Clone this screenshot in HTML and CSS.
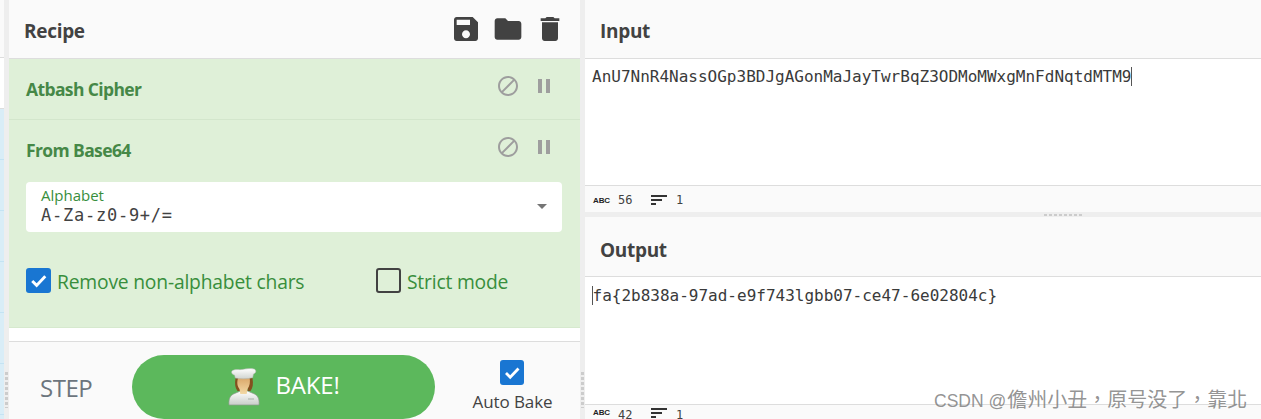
FILE: index.html
```html
<!DOCTYPE html>
<html lang="en">
<head>
<meta charset="utf-8">
<title>CyberChef</title>
<link rel="stylesheet" href="styles.css">
</head>
<body>
<div class="app">
  <div class="strip"><div class="strip-top"></div><div class="strip-mid"></div><div class="strip-blue"></div></div>
  <div class="gutter"><span class="grip-v"></span></div>
  <section class="recipe">
    <header class="head recipe-head">
      <h2 class="title">Recipe</h2>
      <div class="head-icons">
        <svg class="head-icon" viewBox="0 0 24 24"><path d="M17 3H5c-1.11 0-2 .9-2 2v14c0 1.1.89 2 2 2h14c1.1 0 2-.9 2-2V7l-4-4zm-5 16c-1.66 0-3-1.34-3-3s1.34-3 3-3 3 1.34 3 3-1.34 3-3 3zm3-10H5V5h10v4z"/></svg>
        <svg class="head-icon" viewBox="0 0 24 24"><path d="M10 4H4c-1.1 0-1.99.9-1.99 2L2 18c0 1.1.9 2 2 2h16c1.1 0 2-.9 2-2V8c0-1.1-.9-2-2-2h-8l-2-2z"/></svg>
        <svg class="head-icon" viewBox="0 0 24 24"><path d="M6 19c0 1.1.9 2 2 2h8c1.1 0 2-.9 2-2V7H6v12zM19 4h-3.5l-1-1h-5l-1 1H5v2h14V4z"/></svg>
      </div>
    </header>
    <div class="op op-first">
      <div class="op-row">
        <span class="op-name">Atbash Cipher</span>
        <span class="op-controls">
          <svg class="op-icon" viewBox="0 0 24 24"><path d="M12 2C6.48 2 2 6.48 2 12s4.48 10 10 10 10-4.48 10-10S17.52 2 12 2zM4 12c0-4.42 3.58-8 8-8 1.85 0 3.55.63 4.9 1.69L5.69 16.9C4.63 15.55 4 13.85 4 12zm8 8c-1.85 0-3.55-.63-4.9-1.69L18.31 7.1C19.37 8.45 20 10.15 20 12c0 4.42-3.58 8-8 8z"/></svg>
          <svg class="op-icon" viewBox="0 0 24 24"><path d="M6 19h4V5H6v14zm8-14v14h4V5h-4z"/></svg>
        </span>
      </div>
    </div>
    <div class="op op-second">
      <div class="op-row">
        <span class="op-name">From Base64</span>
        <span class="op-controls">
          <svg class="op-icon" viewBox="0 0 24 24"><path d="M12 2C6.48 2 2 6.48 2 12s4.48 10 10 10 10-4.48 10-10S17.52 2 12 2zM4 12c0-4.42 3.58-8 8-8 1.85 0 3.55.63 4.9 1.69L5.69 16.9C4.63 15.55 4 13.85 4 12zm8 8c-1.85 0-3.55-.63-4.9-1.69L18.31 7.1C19.37 8.45 20 10.15 20 12c0 4.42-3.58 8-8 8z"/></svg>
          <svg class="op-icon" viewBox="0 0 24 24"><path d="M6 19h4V5H6v14zm8-14v14h4V5h-4z"/></svg>
        </span>
      </div>
      <div class="field">
        <div class="field-text">
          <span class="field-label">Alphabet</span>
          <span class="field-value">A-Za-z0-9+/=</span>
        </div>
        <span class="caret-down"></span>
      </div>
      <div class="checks">
        <label class="check check-a">
          <span class="box box-on"><svg viewBox="0 0 24 24"><path d="M6 12.5l4.2 4.2L18.5 8" /></svg></span>
          <span>Remove non-alphabet chars</span>
        </label>
        <label class="check">
          <span class="box box-off"></span>
          <span>Strict mode</span>
        </label>
      </div>
    </div>
    <div class="spacer"></div>
    <footer class="controls">
      <span class="step">STEP</span>
      <button class="bake">
        <svg class="chef" viewBox="0 0 34 38">
          <defs>
            <linearGradient id="jacket" x1="0" y1="0" x2="0" y2="1"><stop offset="0" stop-color="#ffffff"/><stop offset="1" stop-color="#c9cec9"/></linearGradient>
            <linearGradient id="hat" x1="0" y1="0" x2="0" y2="1"><stop offset="0" stop-color="#ffffff"/><stop offset="1" stop-color="#d0d4d0"/></linearGradient>
            <linearGradient id="face" x1="0" y1="0" x2="0" y2="1"><stop offset="0" stop-color="#d9a566"/><stop offset="1" stop-color="#f3d9a6"/></linearGradient>
          </defs>
          <path d="M2 37c-.5-5 .5-9 4.500-11l7-3h7l7 3c4 2 5 6 4.500 11z" fill="url(#jacket)" stroke="#8d9a8d" stroke-width=".7"/>
          <path d="M8.500 10c-1 6-.3 10 2 13h3l-1-13zM25.500 10c1 6 .3 10-2 13h-3l1-13z" fill="#84501f"/>
          <path d="M11.500 9h11c1 5 .3 9-2 12l-.8 5h-6.400l-.8-5c-2.300-3-3-7-1-12z" fill="url(#face)"/>
          <path d="M5.500 2.500C8.500.8 12 2 15 1.500c4-.6 8-1.500 12-.5 2.500.7 2.500 4-.5 5l-.8 3.700c-5.500 1.400-12 1.400-17.400.4L7.500 7C5 6.500 3.500 4 5.500 2.500z" fill="url(#hat)" stroke="#aeb5ae" stroke-width=".5"/>
          <path d="M21 31h6" stroke="#a9b2a9" stroke-width="1"/>
        </svg>
        <span>BAKE!</span>
      </button>
      <label class="auto">
        <span class="box box-on box-auto"><svg viewBox="0 0 24 24"><path d="M6 12.500l4.200 4.200L18.500 8" /></svg></span>
        <span class="auto-label">Auto Bake</span>
      </label>
    </footer>
  </section>
  <div class="gutter"><span class="grip-v"></span></div>
  <section class="io">
    <div class="pane pane-input">
      <header class="head"><h2 class="title">Input</h2></header>
      <div class="code">AnU7NnR4NassOGp3BDJgAGonMaJayTwrBqZ3ODMoMWxgMnFdNqtdMTM9<span class="cursor"></span></div>
      <div class="status">
        <span class="abc">ABC</span><span class="num">56</span>
        <svg class="sort" viewBox="0 0 16 10"><path d="M0 0h16v2H0zM0 4h11v2H0zM0 8h5v2H0z"/></svg><span class="num">1</span>
      </div>
    </div>
    <div class="hgutter"><span class="grip-h"></span></div>
    <div class="pane pane-output">
      <header class="head head-output"><h2 class="title title-output">Output</h2></header>
      <div class="code code-output"><span class="cursor cursor-start"></span>fa{2b838a-97ad-e9f743lgbb07-ce47-6e02804c}</div>
      <div class="status status-output">
        <span class="abc">ABC</span><span class="num">42</span>
        <svg class="sort" viewBox="0 0 16 10"><path d="M0 0h16v2H0zM0 4h11v2H0zM0 8h5v2H0z"/></svg><span class="num">1</span>
      </div>
    </div>
  </section>
</div>
<div class="watermark"><span class="wm-latin">CSDN @</span>儋州小丑，原号没了，靠北</div>
</body>
</html>
```

FILE: styles.css
```css
* { box-sizing: border-box; }
html, body { margin: 0; height: 419px; overflow: hidden; background: #fff; }
body { font-family: "Open Sans", "Noto Sans", sans-serif; color: #424242; }

.app { display: flex; height: 419px; overflow: hidden; }

.strip { width: 4px; flex: none; display: flex; flex-direction: column; }
.strip-top { height: 58px; flex: none; background: #fafafa; border-bottom: 1px solid #ddd; }
.strip-mid { height: 51px; flex: none; background: #fff; border-bottom: 1px solid #ddd; }
.strip-blue { flex: 1; background: repeating-linear-gradient(to bottom, #d9edf7 0, #d9edf7 50px, #c4e3f3 50px, #c4e3f3 51px); }

.gutter { width: 5px; flex: none; background: #eee; display: flex; align-items: flex-end; padding: 0 0 11px 1px; }
.grip-v { width: 3px; height: 36px; background: repeating-linear-gradient(to bottom, #ccc 0, #ccc 3px, transparent 3px, transparent 5px); }

.recipe { width: 571px; flex: none; display: flex; flex-direction: column; height: 419px; overflow: hidden; }

.head { height: 59px; flex: none; display: flex; align-items: center; justify-content: space-between; background: #fafafa; border-bottom: 1px solid #ddd; padding-left: 15px; }
.title { margin: 3px 0 0; font-size: 19px; font-weight: 700; color: #424242; letter-spacing: -.3px; }
.title-output { margin-top: 6px; }
.head-icons { display: flex; gap: 10px; padding-right: 14px; }
.head-icon { width: 32px; height: 32px; fill: #424242; display: block; }

.op { background: #dff0d8; flex: none; padding: 0 18px 0 17px; }
.op-first { height: 61px; border-bottom: 1px solid #d3e6cc; }
.op-second { height: 208px; border-bottom: 1px solid #d6e9ce; }
.op-row { height: 60px; display: flex; align-items: center; justify-content: space-between; }
.op-name { font-size: 17.500px; font-weight: 700; color: #468847; letter-spacing: -.62px; }
.op-controls { display: flex; gap: 11.500px; margin: -6px 0 0 0; padding-right: 6.500px; }
.op-icon { width: 24px; height: 24px; fill: #9e9e9e; display: block; }

.field { margin-top: 2px; height: 50px; background: #fff; border-radius: 4px; display: flex; align-items: center; justify-content: space-between; padding: 0 15px 1px 15px; }
.field-text { display: flex; flex-direction: column; }
.field-label { font-size: 15px; line-height: 14px; color: #388e3c; }
.field-value { font-family: "DejaVu Sans Mono", monospace; font-size: 17px; line-height: 21px; letter-spacing: .75px; color: #424242; margin-top: 3px; }
.caret-down { width: 0; height: 0; border: 5px solid transparent; border-top-color: #757575; border-bottom-width: 0; }

.checks { display: flex; margin-top: 36px; }
.check { display: flex; align-items: center; gap: 6px; font-size: 19.300px; color: #388e3c; letter-spacing: -.2px; height: 25px; }
.check > span:last-child { position: relative; top: 1px; }
.check-a { width: 350px; }
.box { width: 25px; height: 25px; flex: none; border-radius: 3px; display: block; }
.box svg { display: block; width: 100%; height: 100%; fill: none; stroke: #fff; stroke-width: 2.800; }
.box-on { background: #1976d2; }
.box-off { border: 2px solid #424242; }

.spacer { height: 13px; flex: none; background: #fff; }

.controls { flex: 1; min-height: 0; display: flex; background: #fafafa; border-top: 1px solid #ddd; padding: 13px 0 0 31px; overflow: hidden; }
.step { font-size: 24px; color: #6c757d; width: 92px; flex: none; margin-top: 16px; line-height: 33px; letter-spacing: -.5px; }
.bake { width: 303px; height: 64px; flex: none; border: 0; border-radius: 32px; background: #5cb85c; color: #fff; font: 24px "Open Sans", sans-serif; letter-spacing: -.2px; display: flex; align-items: center; justify-content: center; gap: 14px; padding: 0 0 6px 0; }
.chef { width: 34px; height: 38px; flex: none; margin-top: 6px; }
.auto { display: flex; flex-direction: column; align-items: center; margin-left: 38px; width: 79px; }
.box-auto { width: 24px; height: 25px; margin: 5px 1.500px 0 0; }
.auto-label { font-size: 17px; color: #424242; margin-top: 5px; white-space: nowrap; letter-spacing: -.1px; }

.io { flex: 1; min-width: 0; display: flex; flex-direction: column; }
.pane { flex: none; display: flex; flex-direction: column; }
.pane-input { height: 212px; }
.pane-output { height: 202px; }
.code { font-family: "DejaVu Sans Mono", monospace; font-size: 16px; line-height: 20px; color: #3a3a3a; padding: 8px 0 0 7px; background: #fff; flex: 1; }
.code-output { padding-top: 9px; }
.cursor { display: inline-block; width: 1px; height: 19px; background: #555; vertical-align: -4px; }
.cursor-start { margin-right: -.5px; }
.head-output { height: 60px; }
.status { height: 27px; flex: none; background: #fafafa; border-top: 1px solid #ddd; display: flex; align-items: center; font-family: "DejaVu Sans Mono", monospace; font-size: 12px; color: #424242; padding: 2px 0 0 8px; }
.status-output { height: 15px; align-items: flex-start; padding-top: 3px; }
.abc { font-family: "Liberation Sans", sans-serif; font-size: 8px; font-weight: 700; color: #222; width: 25px; letter-spacing: -.1px; }
.num { width: 33px; }
.num:last-child { width: auto; }
.sort { width: 16px; height: 10px; fill: #333; margin-right: 9px; }

.hgutter { height: 5px; flex: none; background: #eee; display: flex; justify-content: flex-end; padding: 2px 179px 0 0; }
.grip-h { width: 38px; height: 2px; background: repeating-linear-gradient(to right, #ccc 0, #ccc 3px, transparent 3px, transparent 5px); }

.watermark { position: absolute; left: 934px; top: 387px; font: 20px/26px "Liberation Sans", "Noto Sans CJK TC", sans-serif; color: rgba(120, 120, 120, .8); white-space: nowrap; }
.wm-latin { font-size: 17.500px; margin-right: 1px; }
```
